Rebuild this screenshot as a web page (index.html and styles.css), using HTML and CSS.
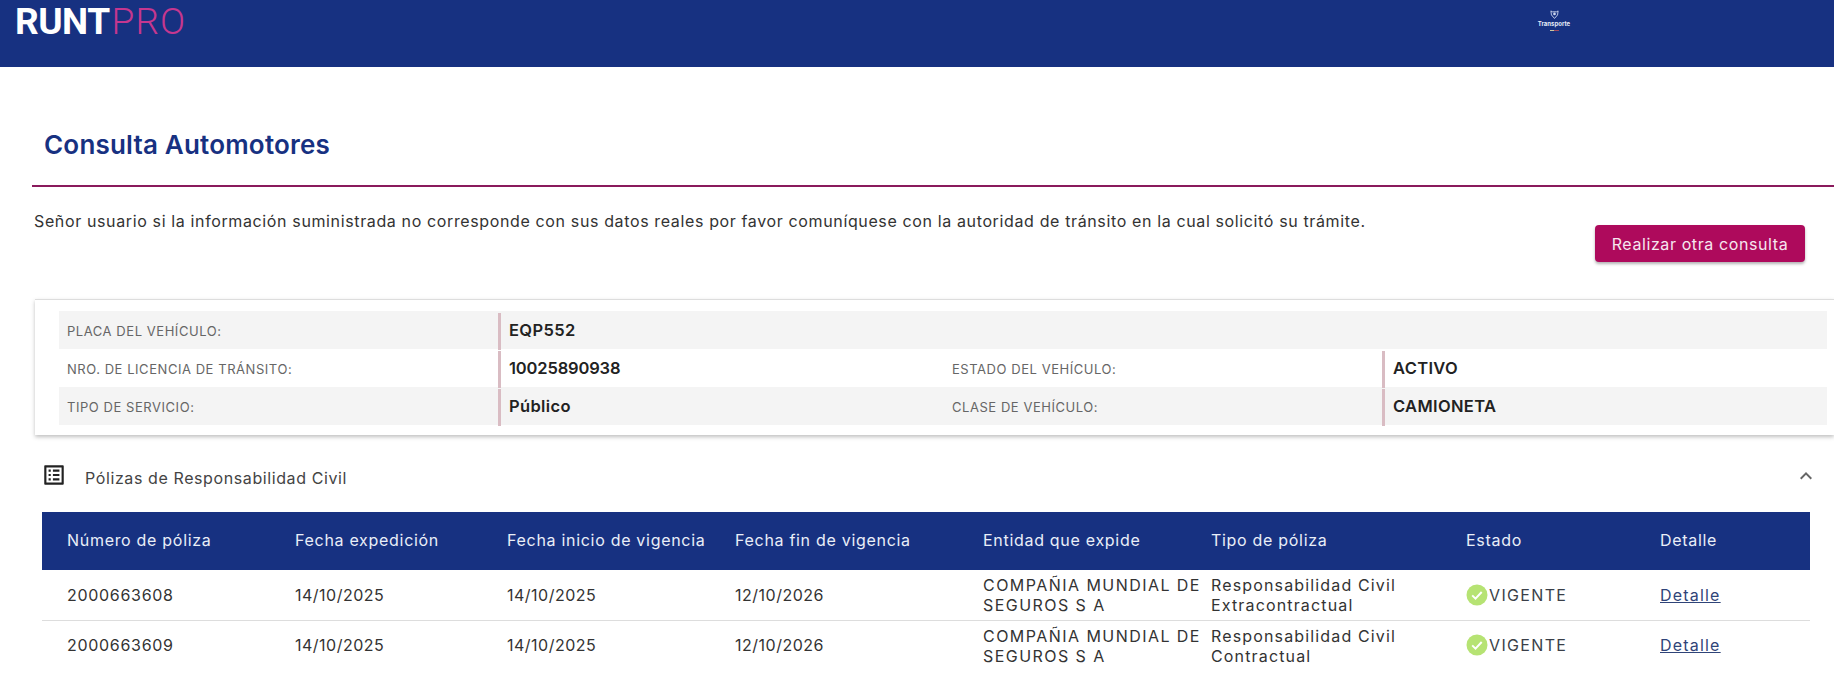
FILE: index.html
```html
<!DOCTYPE html>
<html lang="es">
<head>
<meta charset="utf-8">
<title>Consulta Automotores</title>
<link rel="stylesheet" href="styles.css">
</head>
<body>
<header class="topbar">
  <div class="logo"><span class="logo-bold">RUNT</span><span class="logo-light">PRO</span></div>
  <div class="ministry">
    <svg class="ministry-icon" viewBox="0 0 10 10" width="9" height="9"><path d="M1 1l1.5 1h5L9 1 8.4 5.5 5 9.4 1.6 5.5z" fill="none" stroke="#cfd8f0" stroke-width="1"/><circle cx="5" cy="4.4" r="1.5" fill="#cfd8f0"/></svg>
    <span class="ministry-name">Transporte</span>
    <span class="ministry-flag"></span>
  </div>
</header>
<main class="page">
  <h1 class="title">Consulta Automotores</h1>
  <div class="notice">
    <p class="notice-text">Señor usuario si la información suministrada no corresponde con sus datos reales por favor comuníquese con la autoridad de tránsito en la cual solicitó su trámite.</p>
    <button class="btn" type="button">Realizar otra consulta</button>
  </div>
  <section class="card">
    <div class="row shaded">
      <div class="label">PLACA DEL VEHÍCULO:</div><div class="value">EQP552</div>
      <div class="label"></div><div class="value empty"></div>
    </div>
    <div class="row">
      <div class="label">NRO. DE LICENCIA DE TRÁNSITO:</div><div class="value numeric">10025890938</div>
      <div class="label">ESTADO DEL VEHÍCULO:</div><div class="value">ACTIVO</div>
    </div>
    <div class="row shaded">
      <div class="label">TIPO DE SERVICIO:</div><div class="value">Público</div>
      <div class="label">CLASE DE VEHÍCULO:</div><div class="value">CAMIONETA</div>
    </div>
  </section>
  <section class="panel">
    <div class="panel-head">
      <svg class="panel-icon" viewBox="0 0 24 24" width="26" height="26"><path d="M19 5v14H5V5h14m1.1-2H3.9c-.5 0-.9.4-.9.9v16.2c0 .4.4.9.9.9h16.2c.4 0 .9-.5.9-.9V3.9c0-.5-.5-.9-.9-.9zM11 7h6v2h-6V7zm0 4h6v2h-6v-2zm0 4h6v2h-6zM7 7h2v2H7zm0 4h2v2H7zm0 4h2v2H7z"/></svg>
      <span class="panel-title">Pólizas de Responsabilidad Civil</span>
      <svg class="panel-chevron" viewBox="0 0 24 24" width="24" height="24"><path d="M12 8l-6 6 1.41 1.41L12 10.83l4.59 4.58L18 14z"/></svg>
    </div>
    <table class="grid">
      <colgroup>
        <col class="c1"><col class="c2"><col class="c3"><col class="c4"><col class="c5"><col class="c6"><col class="c7"><col class="c8">
      </colgroup>
      <thead>
        <tr><th>Número de póliza</th><th>Fecha expedición</th><th>Fecha inicio de vigencia</th><th>Fecha fin de vigencia</th><th>Entidad que expide</th><th>Tipo de póliza</th><th>Estado</th><th>Detalle</th></tr>
      </thead>
      <tbody>
        <tr>
          <td>2000663608</td><td class="date">14/10/2025</td><td class="date">14/10/2025</td><td class="date">12/10/2026</td>
          <td class="wrap entity">COMPAÑIA MUNDIAL DE<br>SEGUROS S A</td><td class="wrap">Responsabilidad Civil<br>Extracontractual</td>
          <td><span class="status"><svg viewBox="0 0 22 22" width="22" height="22"><circle cx="11" cy="11" r="10.5" fill="#b6e373"/><path d="M6.2 11.4l3.3 3.2 6.2-6.6" fill="none" stroke="#fff" stroke-width="2"/></svg>VIGENTE</span></td>
          <td><a class="link" href="#">Detalle</a></td>
        </tr>
        <tr>
          <td>2000663609</td><td class="date">14/10/2025</td><td class="date">14/10/2025</td><td class="date">12/10/2026</td>
          <td class="wrap entity">COMPAÑIA MUNDIAL DE<br>SEGUROS S A</td><td class="wrap">Responsabilidad Civil<br>Contractual</td>
          <td><span class="status"><svg viewBox="0 0 22 22" width="22" height="22"><circle cx="11" cy="11" r="10.5" fill="#b6e373"/><path d="M6.2 11.4l3.3 3.2 6.2-6.6" fill="none" stroke="#fff" stroke-width="2"/></svg>VIGENTE</span></td>
          <td><a class="link" href="#">Detalle</a></td>
        </tr>
      </tbody>
    </table>
  </section>
</main>
</body>
</html>
```
FILE: styles.css
```css
* { box-sizing: border-box; }
html, body { margin: 0; padding: 0; }
body {
  background: #fff;
  color: #333;
  font-family: Inter, "Open Sans", sans-serif;
  height: 682px;
  overflow: hidden;
}
.topbar {
  height: 67px;
  background: #173181;
  display: flex;
  justify-content: space-between;
  align-items: flex-start;
  padding: 0 264px 0 15px;
}
.logo {
  font-family: Roboto, sans-serif;
  font-size: 37px;
  line-height: 43px;
}
.logo-bold { color: #fff; font-weight: 700; letter-spacing: -0.5px; }
.logo-light { color: #c5378f; font-weight: 300; margin-left: 2px; letter-spacing: 1px; }
.ministry {
  display: flex;
  flex-direction: column;
  align-items: center;
  padding-top: 10px;
  width: 32px;
}
.ministry-icon { display: block; }
.ministry-name {
  color: #e6ebf7;
  font-size: 6px;
  line-height: 8px;
  font-weight: 700;
  margin-top: 1px;
}
.ministry-flag {
  width: 9px;
  height: 1px;
  margin-top: 2px;
  background: linear-gradient(90deg, #c9c9a0 50%, #a04a60 50%);
}
.title {
  margin: 0 0 0 32px;
  padding: 61px 0 23px 12px;
  height: 120px;
  border-bottom: 2px solid #8a1a5c;
  color: #173181;
  font-size: 26px;
  line-height: 34px;
  font-weight: 600;
  letter-spacing: 0.2px;
}
.notice {
  display: flex;
  justify-content: space-between;
  align-items: flex-start;
  padding: 0 29px 0 34px;
}
.notice-text {
  margin: 24px 0 0;
  font-size: 16px;
  line-height: 20px;
  color: #333;
  letter-spacing: 0.63px;
}
.btn {
  margin-top: 38px;
  width: 210px;
  height: 37px;
  background: #ae0a5c;
  color: #f6e6ef;
  border: 0;
  border-radius: 4px;
  box-shadow: 0 2px 3px rgba(0,0,0,.3);
  font-family: inherit;
  font-size: 16px;
  letter-spacing: 0.6px;
}
.card {
  margin: 37px 0 0 35px;
  padding: 11px 7px 10px 24px;
  height: 136px;
  border-top: 1px solid #ddd;
  background: #fff;
  box-shadow: 0 2px 4px rgba(0,0,0,.25);
}
.row {
  display: grid;
  grid-template-columns: 439px 446px 438px 445px;
  height: 38px;
}
.shaded { background: #f4f4f4; }
.label {
  padding: 1px 0 0 8px;
  font-size: 13px;
  line-height: 38px;
  color: #666;
  letter-spacing: 0.55px;
}
.value {
  margin-top: 2px;
  padding-left: 8px;
  border-left: 3px solid #d9bcc3;
  font-size: 16.5px;
  line-height: 34px;
  font-weight: 600;
  color: #222;
  letter-spacing: 0.35px;
}
.value.numeric { letter-spacing: -0.15px; }
.value.empty { border-left: 0; }
.panel-head {
  display: flex;
  align-items: center;
  height: 77px;
  padding: 3px 16px 0 41px;
}
.panel-icon { fill: #222; flex: none; }
.panel-title {
  margin-left: 18px;
  font-size: 16px;
  letter-spacing: 0.6px;
  color: #444;
  padding-top: 5px;
}
.panel-chevron { fill: #666; margin-left: auto; margin-top: 2px; }
.grid {
  margin-left: 42px;
  width: 1768px;
  table-layout: fixed;
  border-collapse: collapse;
  font-size: 16px;
  letter-spacing: 0.7px;
}
.c1 { width: 228px; }
.c2 { width: 212px; }
.c3 { width: 228px; }
.c4 { width: 248px; }
.c5 { width: 228px; }
.c6 { width: 255px; }
.c7 { width: 194px; }
.c8 { width: 175px; }
.grid th {
  height: 58px;
  background: #173181;
  color: #e9eef8;
  font-weight: 400;
  text-align: left;
  padding: 0 0 2px 25px;
  white-space: nowrap;
}
.grid td {
  height: 50px;
  padding: 0 0 0 25px;
  color: #333;
  border-bottom: 1px solid #ddd;
  line-height: 20px;
  white-space: nowrap;
}
.grid tbody tr:last-child td { border-bottom: 0; }
.grid td.date { letter-spacing: 0.5px; }
.grid td.wrap { padding-top: 1px; letter-spacing: 1.15px; }
.grid td.entity { letter-spacing: 1.45px; }
.status {
  display: flex;
  align-items: center;
  letter-spacing: 1.35px;
  color: #3a3f48;
}
.status svg { margin-right: 1px; flex: none; }
.link { color: #2f4478; letter-spacing: 1.2px; }
```
